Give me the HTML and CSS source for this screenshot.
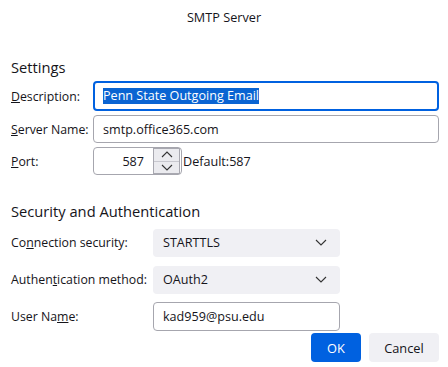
FILE: index.html
```html
<!DOCTYPE html>
<html>
<head>
<meta charset="utf-8">
<link rel="stylesheet" href="styles.css">
</head>
<body>
<div class="dialog">
  <div class="title">SMTP Server</div>
  <h2 class="heading settings-h">Settings</h2>
  <div class="grid1">
    <label class="lbl"><u>D</u>escription:</label>
    <div class="input focused"><span class="sel">Penn State Outgoing Email</span></div>
    <label class="lbl"><u>S</u>erver Name:</label>
    <div class="input">smtp.office365.com</div>
    <label class="lbl"><u>P</u>ort:</label>
    <div class="port-row">
      <div class="port">
        <span class="port-val">587</span>
        <div class="spin">
          <div class="spin-btn"><svg width="12" height="7" viewBox="0 0 12 7"><path d="M1 6 L6 1 L11 6" fill="none" stroke="#333" stroke-width="1.1"/></svg></div>
          <div class="spin-btn"><svg width="12" height="7" viewBox="0 0 12 7"><path d="M1 1 L6 6 L11 1" fill="none" stroke="#333" stroke-width="1.1"/></svg></div>
        </div>
      </div>
      <span class="default">Default:587</span>
    </div>
  </div>
  <h2 class="heading sec-h">Security and Authentication</h2>
  <div class="grid2">
    <label class="lbl">Co<u>n</u>nection security:</label>
    <div class="select"><span>STARTTLS</span><svg width="12" height="7" viewBox="0 0 12 7"><path d="M1 1 L6 6 L11 1" fill="none" stroke="#333" stroke-width="1.1"/></svg></div>
    <label class="lbl">Authen<u>t</u>ication method:</label>
    <div class="select"><span>OAuth2</span><svg width="12" height="7" viewBox="0 0 12 7"><path d="M1 1 L6 6 L11 1" fill="none" stroke="#333" stroke-width="1.1"/></svg></div>
    <label class="lbl">User Na<u>m</u>e:</label>
    <div class="input user">kad959@psu.edu</div>
  </div>
  <div class="buttons">
    <button class="btn ok">OK</button>
    <button class="btn cancel">Cancel</button>
  </div>
</div>
</body>
</html>
```
FILE: styles.css
```css
html, body {
  margin: 0;
  padding: 0;
  background: #ffffff;
}
body {
  font-family: "Open Sans", "Noto Sans", sans-serif;
  font-size: 12.3px;
  color: #15141a;
}
.dialog {
  width: 448px;
  height: 367px;
  padding: 0 9px 0 11px;
  box-sizing: border-box;
  display: flex;
  flex-direction: column;
}
.title {
  height: 34px;
  line-height: 34px;
  text-align: center;
  font-size: 12.7px;
  margin-left: -11px;
  margin-right: -9px;
}
.heading {
  font-size: 14.7px;
  font-weight: normal;
  margin: 0;
  line-height: 20px;
}
.settings-h {
  margin-top: 23px;
}
.grid1 {
  margin-top: 4px;
  display: grid;
  grid-template-columns: 82px 1fr;
  row-gap: 4px;
  align-items: center;
}
.lbl {
  white-space: nowrap;
}
.input {
  height: 28px;
  box-sizing: border-box;
  border: 1px solid #a6a6ae;
  border-radius: 4px;
  padding: 0 9px;
  display: flex;
  align-items: center;
  font-size: 12.6px;
}
.input.focused {
  height: 30px;
  border: 2px solid #0061e0;
  padding: 0 8px;
}
.sel {
  background: #0a64d2;
  color: #fff;
  line-height: 16px;
}
.port-row {
  display: flex;
  align-items: center;
}
.port {
  width: 89px;
  height: 28px;
  box-sizing: border-box;
  border: 1px solid #a6a6ae;
  border-radius: 4px;
  display: flex;
  align-items: center;
  padding: 1px;
  font-size: 12.6px;
}
.port-val {
  flex: 1;
  text-align: right;
  padding-right: 9px;
}
.spin {
  width: 27px;
  height: 26px;
  box-sizing: border-box;
  border: 1px solid #a8a8b0;
  background: #ebebef;
  display: flex;
  flex-direction: column;
}
.spin-btn {
  flex: 1;
  display: flex;
  align-items: center;
  justify-content: center;
}
.spin-btn + .spin-btn {
  border-top: 1px solid #c8c8cf;
}
.default {
  margin-left: 1px;
  font-size: 12.6px;
}
.sec-h {
  margin-top: 26px;
}
.grid2 {
  margin-top: 7px;
  display: grid;
  grid-template-columns: 142px 187px;
  grid-template-rows: 29px 29px 29px;
  row-gap: 8px;
  align-items: center;
}
.select {
  height: 28px;
  background: #f0f0f4;
  border-radius: 4px;
  display: flex;
  align-items: center;
  justify-content: space-between;
  padding: 0 13px 0 10px;
  font-size: 12.6px;
}
.input.user {
  height: 29px;
}
.buttons {
  display: flex;
  justify-content: flex-end;
  gap: 8px;
  margin-top: 2px;
}
.btn {
  font-family: inherit;
  font-size: 12.8px;
  height: 29px;
  border: none;
  border-radius: 4px;
  padding: 0;
}
.ok {
  width: 50px;
  background: #0061e0;
  color: #fff;
}
.cancel {
  width: 70px;
  background: #f0f0f4;
  color: #15141a;
}
```
